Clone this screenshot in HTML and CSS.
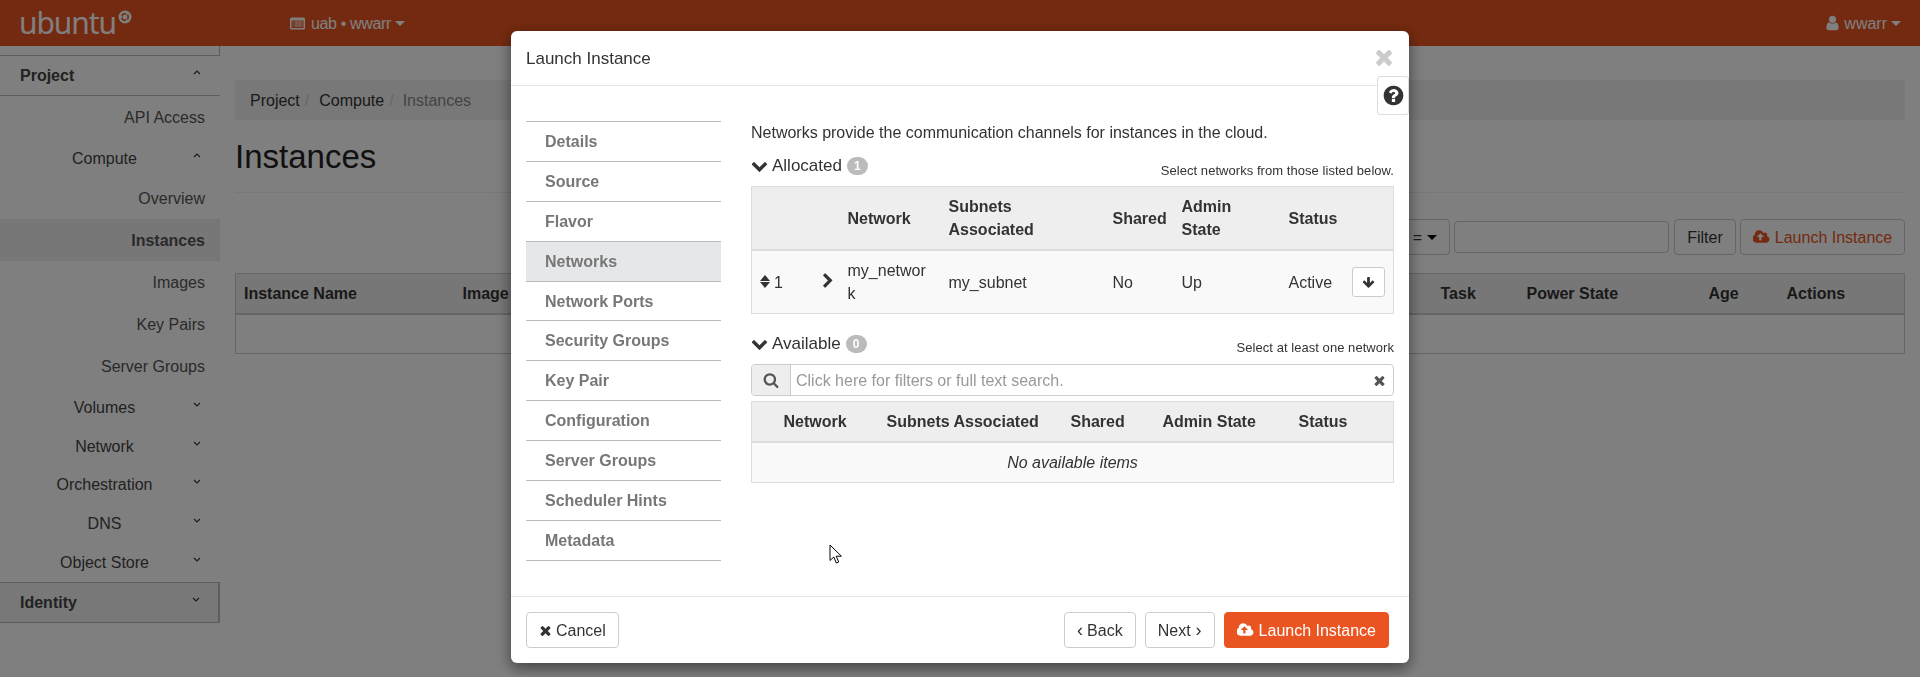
FILE: index.html
```html
<!DOCTYPE html>
<html lang="en">
<head>
<meta charset="utf-8">
<title>Instances</title>
<link rel="stylesheet" href="styles.css">
</head>
<body>
<svg class="defs" width="0" height="0" aria-hidden="true">
  <symbol id="i-times" viewBox="0 0 1792 1792"><path d="M1490 1322q0 40-28 68l-136 136q-28 28-68 28t-68-28l-294-294-294 294q-28 28-68 28t-68-28l-136-136q-28-28-28-68t28-68l294-294-294-294q-28-28-28-68t28-68l136-136q28-28 68-28t68 28l294 294 294-294q28-28 68-28t68 28l136 136q28 28 28 68t-28 68l-294 294 294 294q28 28 28 68z"/></symbol>
  <symbol id="i-question" viewBox="0 0 1792 1792"><path d="M1024 1376v-192q0-14-9-23t-23-9h-192q-14 0-23 9t-9 23v192q0 14 9 23t23 9h192q14 0 23-9t9-23zm256-672q0-88-55.500-163t-138.500-116-170-41q-243 0-371 213-15 24 8 42l132 100q7 6 19 6 16 0 25-12 53-68 86-92 34-24 86-24 48 0 85.500 26t37.500 59q0 38-20 61t-68 45q-63 28-115.500 86.500t-52.500 125.500v36q0 14 9 23t23 9h192q14 0 23-9t9-23q0-19 21.500-49.500t54.500-49.500q32-18 49-28.500t46-35 44.500-48 28-60.500 12.500-81zm384 192q0 209-103 385.500t-279.500 279.500-385.500 103-385.500-103-279.500-279.500-103-385.500 103-385.500 279.500-279.500 385.500-103 385.500 103 279.500 279.500 103 385.500z"/></symbol>
  <symbol id="i-chev-down" viewBox="0 0 1792 1792"><path d="M1683 808l-742 741q-19 19-45 19t-45-19l-742-741q-19-19-19-45.500t19-45.500l166-165q19-19 45-19t45 19l531 531 531-531q19-19 45-19t45 19l166 165q19 19 19 45.500t-19 45.500z"/></symbol>
  <symbol id="i-chev-right" viewBox="0 0 1792 1792"><path d="M1363 877l-742 742q-19 19-45 19t-45-19l-166-166q-19-19-19-45t19-45l531-531-531-531q-19-19-19-45t19-45l166-166q19-19 45-19t45 19l742 742q19 19 19 45t-19 45z"/></symbol>
  <symbol id="i-arrow-down" viewBox="0 0 1792 1792"><path d="M1675 832q0 53-37 90l-651 652q-39 37-91 37-53 0-90-37l-651-652q-38-36-38-90 0-53 38-91l74-75q39-37 91-37 53 0 90 37l294 294v-704q0-52 38-90t90-38h128q52 0 90 38t38 90v704l294-294q37-37 90-37 52 0 91 37l75 75q37 39 37 91z"/></symbol>
  <symbol id="i-search" viewBox="0 0 1792 1792"><path d="M1216 832q0-185-131.500-316.500t-316.500-131.500-316.500 131.500-131.500 316.500 131.500 316.500 316.500 131.500 316.500-131.500 131.500-316.500zm512 832q0 52-38 90t-90 38q-54 0-90-38l-343-342q-179 124-399 124-143 0-273.500-55.500t-225-150-150-225-55.500-273.500 55.500-273.500 150-225 225-150 273.500-55.500 273.500 55.500 225 150 150 225 55.500 273.500q0 220-124 399l343 343q37 37 37 90z"/></symbol>
  <symbol id="i-cloud" viewBox="0 0 1920 1792"><path d="M1216 864q0-14-9-23l-352-352q-9-9-23-9t-23 9l-351 351q-10 12-10 24 0 14 9 23t23 9h224v352q0 13 9.500 22.500t22.500 9.500h192q13 0 22.500-9.500t9.500-22.500v-352h224q13 0 22.500-9.500t9.500-22.500zm640 288q0 159-112.500 271.500t-271.500 112.500h-1088q-185 0-316.500-131.500t-131.500-316.500q0-130 70-240t188-165q-2-30-2-43 0-212 150-362t362-150q156 0 285.500 87t188.500 231q71-62 166-62 106 0 181 75t75 181q0 76-41 138 130 31 213.500 135.500t83.500 238.500z"/></symbol>
  <symbol id="i-user" viewBox="0 0 1792 1792"><path d="M1536 1399q0 109-62.500 187t-150.500 78h-854q-88 0-150.500-78t-62.500-187q0-85 8.500-160.500t31.500-152 58.500-131 94-89 134.500-34.500q131 128 313 128t313-128q76 0 134.500 34.500t94 89 58.500 131 31.500 152 8.500 160.500zm-256-887q0 159-112.500 271.500t-271.500 112.500-271.500-112.500-112.500-271.500 112.500-271.500 271.500-112.500 271.500 112.500 112.500 271.500z"/></symbol>
  <symbol id="i-up" viewBox="0 0 8 5"><path d="M1 4l3-3 3 3" fill="none" stroke="currentColor" stroke-width="1.100"/></symbol>
  <symbol id="i-down" viewBox="0 0 8 5"><path d="M1 1l3 3 3-3" fill="none" stroke="currentColor" stroke-width="1.100"/></symbol>
</svg>

<header class="navbar">
  <div class="brand">
    <span class="brand-word">ubuntu</span>
    <svg class="brand-mark" viewBox="0 0 14 14"><circle cx="7" cy="7" r="6.500" fill="currentColor"/><circle cx="7" cy="7" r="3.200" fill="none" stroke="#e95420" stroke-width="1.500"/><circle cx="3.200" cy="7" r="1.100" fill="currentColor"/><circle cx="9" cy="3.700" r="1.100" fill="currentColor"/><circle cx="9" cy="10.300" r="1.100" fill="currentColor"/></svg>
  </div>
  <div class="project-picker">
    <svg class="tray" viewBox="0 0 16 13"><rect x="0.500" y="0.500" width="15" height="12" rx="1.500" fill="currentColor"/><path d="M2 3.500h12v7.500H2z" fill="#e95420"/><path d="M5 5h8M5 7h8M5 9h8M3 5h1M3 7h1M3 9h1" stroke="currentColor"/></svg>
    <span class="picker-text">uab • wwarr</span><i class="caret"></i>
  </div>
  <div class="user-menu">
    <svg class="ic user-ic"><use href="#i-user"/></svg>
    <span>wwarr</span><i class="caret"></i>
  </div>
</header>

<div class="page">
  <nav class="sidebar">
    <div class="side-stub"></div>
    <div class="side-head side-project"><span>Project</span><svg class="angle"><use href="#i-up"/></svg></div>
    <a class="leaf">API Access</a>
    <div class="group group-tall"><span>Compute</span><svg class="angle"><use href="#i-up"/></svg></div>
    <a class="leaf leaf-short">Overview</a>
    <a class="leaf leaf-active">Instances</a>
    <a class="leaf">Images</a>
    <a class="leaf">Key Pairs</a>
    <a class="leaf">Server Groups</a>
    <div class="group group-tall"><span>Volumes</span><svg class="angle"><use href="#i-down"/></svg></div>
    <div class="group group-short"><span>Network</span><svg class="angle"><use href="#i-down"/></svg></div>
    <div class="group"><span>Orchestration</span><svg class="angle"><use href="#i-down"/></svg></div>
    <div class="group"><span>DNS</span><svg class="angle"><use href="#i-down"/></svg></div>
    <div class="group"><span>Object Store</span><svg class="angle"><use href="#i-down"/></svg></div>
    <div class="side-head side-identity"><span>Identity</span><svg class="angle"><use href="#i-down"/></svg></div>
  </nav>

  <main class="content">
    <ol class="crumbs">
      <li>Project</li><li class="sep">/</li><li>Compute</li><li class="sep">/</li><li class="crumb-current">Instances</li>
    </ol>
    <h1 class="page-title">Instances</h1>
    <div class="toolbar">
      <button class="btn btn-drop">Instance ID = <i class="caret caret-dark"></i></button>
      <input class="filter-input" type="text" aria-label="Filter">
      <button class="btn btn-filter">Filter</button>
      <button class="btn btn-launch-outline"><svg class="ic cloud-ic"><use href="#i-cloud"/></svg>Launch Instance</button>
    </div>
    <table class="inst-table">
      <colgroup><col class="c-name"><col class="c-image"><col class="c-task"><col class="c-power"><col class="c-age"><col class="c-actions"></colgroup>
      <thead><tr><th>Instance Name</th><th>Image</th><th>Task</th><th>Power State</th><th>Age</th><th>Actions</th></tr></thead>
      <tbody><tr><td colspan="6">&nbsp;</td></tr></tbody>
    </table>
  </main>
</div>

<div class="backdrop"></div>

<div class="modal-wrap">
  <section class="modal">
    <div class="modal-head">
      <h2 class="modal-title">Launch Instance</h2>
      <svg class="ic close-ic"><use href="#i-times"/></svg>
    </div>
    <div class="help-tab"><svg class="ic help-ic"><use href="#i-question"/></svg></div>
    <div class="modal-body">
      <ul class="steps">
        <li>Details</li>
        <li>Source</li>
        <li>Flavor</li>
        <li class="step-active">Networks</li>
        <li>Network Ports</li>
        <li>Security Groups</li>
        <li>Key Pair</li>
        <li>Configuration</li>
        <li>Server Groups</li>
        <li>Scheduler Hints</li>
        <li>Metadata</li>
      </ul>
      <div class="pane">
        <p class="intro">Networks provide the communication channels for instances in the cloud.</p>
        <div class="sec-row">
          <div class="sec-title"><svg class="ic sec-chev"><use href="#i-chev-down"/></svg>Allocated<span class="badge">1</span></div>
          <small class="sec-hint">Select networks from those listed below.</small>
        </div>
        <table class="net-table alloc">
          <colgroup><col class="a-drag"><col class="a-exp"><col class="a-net"><col class="a-sub"><col class="a-shared"><col class="a-admin"><col class="a-status"><col class="a-act"></colgroup>
          <thead><tr><th></th><th></th><th>Network</th><th>Subnets Associated</th><th>Shared</th><th>Admin State</th><th>Status</th><th></th></tr></thead>
          <tbody><tr>
            <td class="drag-cell"><span class="sort"><i class="tri-up"></i><i class="tri-down"></i></span>1</td>
            <td class="exp-cell"><svg class="ic exp-ic"><use href="#i-chev-right"/></svg></td>
            <td class="net-name">my_network</td>
            <td>my_subnet</td>
            <td>No</td>
            <td>Up</td>
            <td>Active</td>
            <td class="act-cell"><button class="btn-mini"><svg class="ic mini-ic"><use href="#i-arrow-down"/></svg></button></td>
          </tr></tbody>
        </table>
        <div class="sec-row sec-row-2">
          <div class="sec-title"><svg class="ic sec-chev"><use href="#i-chev-down"/></svg>Available<span class="badge">0</span></div>
          <small class="sec-hint">Select at least one network</small>
        </div>
        <div class="search-bar">
          <span class="search-addon"><svg class="ic search-ic"><use href="#i-search"/></svg></span>
          <span class="search-text">Click here for filters or full text search.</span>
          <svg class="ic clear-ic"><use href="#i-times"/></svg>
        </div>
        <table class="net-table avail">
          <colgroup><col class="b-first"><col class="b-net"><col class="b-sub"><col class="b-shared"><col class="b-admin"><col class="b-status"></colgroup>
          <thead><tr><th></th><th>Network</th><th>Subnets Associated</th><th>Shared</th><th>Admin State</th><th>Status</th></tr></thead>
          <tbody><tr><td colspan="6" class="empty-cell">No available items</td></tr></tbody>
        </table>
      </div>
    </div>
    <div class="modal-foot">
      <button class="btn btn-foot"><svg class="ic foot-x"><use href="#i-times"/></svg>Cancel</button>
      <div class="foot-right">
        <button class="btn btn-foot"><span class="ang">‹</span>Back</button>
        <button class="btn btn-foot">Next<span class="ang ang-r">›</span></button>
        <button class="btn btn-foot btn-primary"><svg class="ic cloud-ic"><use href="#i-cloud"/></svg>Launch Instance</button>
      </div>
    </div>
  </section>
</div>

<svg class="cursor" viewBox="0 0 13 20"><path d="M1 1v15.500l3.800-3.500 2.500 6 2.400-1-2.500-5.800h5.200z" fill="#fff" stroke="#000" stroke-width="1"/></svg>
</body>
</html>
```
FILE: styles.css
```css
* { box-sizing: border-box; }
html, body { margin: 0; height: 100%; }
body {
  overflow: hidden;
  background: #fff;
  color: #333;
  font-family: "Liberation Sans", Arial, sans-serif;
  font-size: 16px;
  line-height: 23px;
}
.defs { position: absolute; }
.ic { display: inline-block; fill: currentColor; flex: none; }

/* caret */
.caret {
  display: inline-block;
  width: 0; height: 0;
  margin-left: 5px;
  vertical-align: middle;
  border-top: 5px solid currentColor;
  border-left: 5px solid transparent;
  border-right: 5px solid transparent;
}
.caret-dark { color: #000; }

/* navbar */
.navbar {
  height: 46px;
  display: flex;
  align-items: center;
  background: #e95420;
  color: #fff;
  padding: 0 19px 0 19px;
}
.brand { width: 270px; display: flex; align-items: flex-start; color: #fff; }
.brand-word { font-family: "Noto Sans", sans-serif; font-weight: 400; font-size: 30px; line-height: 40px; letter-spacing: -1.100px; }
.brand-mark { width: 14px; height: 14px; margin: 7px 0 0 2px; }
.project-picker { display: flex; align-items: center; gap: 5px; flex: 1; }
.picker-text { letter-spacing: -0.35px; }
.project-picker .caret { margin-left: -1px; }
.tray { width: 17px; height: 13px; }
.user-menu { display: flex; align-items: center; }
.user-ic { width: 17px; height: 18px; margin-right: 3px; }
.user-menu .caret { margin-left: 4px; }

/* page */
.page { display: flex; align-items: flex-start; }
.sidebar { width: 220px; flex: none; color: #555; }
.side-stub { height: 10px; border-bottom: 1px solid #bbb; border-right: 1px solid #bbb; }
.side-head {
  display: flex; align-items: center; justify-content: space-between;
  padding: 0 19px 0 20px;
  font-weight: 700; color: #444;
}
.side-project { height: 40px; border-bottom: 1px solid #bbb; }
.side-identity { height: 41px; background: #f0f0f0; border: 1px solid #bbb; border-left: 0; border-right-width: 2px; padding-right: 18px; }
.angle { width: 8px; height: 5px; margin-top: -6px; color: #333; }
.leaf { display: block; height: 42px; line-height: 43px; text-align: right; padding-right: 15px; }
.leaf-short { height: 41px; line-height: 41px; }
.leaf-active { font-weight: 700; background: #eee; }
.group {
  height: 39px; display: flex; align-items: center; color: #444;
  padding-right: 19px;
}
.group span { width: 208px; text-align: center; margin-right: -15px; padding-left: 1px; }
.group-tall { height: 40px; }
.group-short { height: 38px; }

.content { flex: 1; padding: 34px 15px 0 15px; min-width: 0; }
.crumbs {
  list-style: none; margin: 0; padding: 9px 15px 0; height: 40px;
  display: flex; gap: 5px; background: #f1f1f1; border-radius: 4px; color: #333;
}
.sep { color: #ccc; padding-right: 5px; }
.crumb-current { color: #888; margin-left: -1px; }
.page-title {
  margin: 17px 0 0; font-size: 33px; font-weight: 400; line-height: 40px; color: #222;
  padding-bottom: 15px; border-bottom: 1px solid #eee;
}
.toolbar { display: flex; justify-content: flex-end; align-items: center; gap: 4px; margin-top: 26px; }
.btn {
  height: 36px; padding: 0 12px;
  display: inline-flex; align-items: center;
  background: #fff; border: 1px solid #ccc; border-radius: 4px;
  color: #333; font: inherit; line-height: 23px; white-space: nowrap;
}
.filter-input { width: 215px; height: 32px; border: 1px solid #ccc; border-radius: 4px; background: #fff; margin-right: 1px; }
.btn-filter { width: 62px; justify-content: center; }
.btn-launch-outline { color: #e95420; width: 165px; padding: 0; justify-content: center; }
.cloud-ic { width: 17px; height: 16px; margin-right: 5px; }
.inst-table {
  width: 100%; table-layout: fixed; border-collapse: collapse; margin-top: 18px;
  border: 1px solid #ccc;
}
.inst-table th { background: #eee; text-align: left; padding: 8px; border-bottom: 2px solid #ccc; color: #333; font-weight: 700; }
.inst-table td { padding: 7px 8px 8px; }
.c-name { width: 219px; }
.c-image { width: 978px; }
.c-task { width: 86px; }
.c-power { width: 182px; }
.c-age { width: 78px; }

/* modal */
.backdrop { position: fixed; inset: 0; background: rgba(0,0,0,.5); }
.modal-wrap { position: fixed; inset: 0; }
.modal {
  position: relative;
  width: 898px; height: 632px; margin: 31px auto 0;
  display: flex; flex-direction: column;
  background: #fff; border-radius: 6px;
  box-shadow: 0 5px 15px rgba(0,0,0,.5);
}
.modal-head {
  height: 55px; flex: none;
  display: flex; align-items: center; justify-content: space-between;
  padding: 0 13px 0 15px; border-bottom: 1px solid #e5e5e5;
}
.modal-title { margin: 2px 0 0; font-size: 17px; font-weight: 400; color: #333; line-height: 24px; }
.close-ic { width: 24px; height: 24px; color: #ccc; margin-top: -3px; }
.help-tab {
  position: absolute; right: 0; top: 45px; width: 32px; height: 39px;
  display: flex; align-items: center; justify-content: center;
  background: #fff; border: 1px solid #ddd; border-radius: 3px;
}
.help-ic { width: 23px; height: 23px; color: #333; }
.modal-body { flex: 1; display: flex; padding: 35px 15px 0 15px; gap: 30px; min-height: 0; }
.steps { list-style: none; margin: 0; padding: 0; width: 195px; flex: none; border-top: 1px solid #bbb; align-self: flex-start; }
.steps li {
  height: 39.9px; line-height: 39px; padding-left: 19px;
  border-bottom: 1px solid #bbb; font-weight: 700; color: #777;
}
.steps .step-active { background: #e6e7e8; }
.pane { flex: 1; min-width: 0; }
.intro { margin: 0; color: #333; }
.sec-row { display: flex; justify-content: space-between; margin-top: 9px; height: 24px; }
.sec-row-2 { margin-top: 17px; }
.sec-title { font-size: 17px; color: #333; display: flex; align-items: center; }
.sec-chev { width: 17px; height: 17px; margin-right: 4px; }
.badge {
  display: inline-block; min-width: 21px; height: 18px; margin-left: 5px; margin-top: 2px;
  background: #bbb; color: #fff; border-radius: 10px;
  font-size: 12px; font-weight: 700; line-height: 18px; text-align: center;
}
.sec-hint { font-size: 13px; letter-spacing: 0.05px; color: #333; line-height: 16px; align-self: flex-end; margin-bottom: -2px; }
.sec-row-2 .sec-hint { margin-bottom: -1px; }
.net-table {
  width: 100%; table-layout: fixed; border-collapse: collapse;
  margin-top: 9px; border: 1px solid #ddd;
}
.net-table th {
  background: #eee; border-bottom: 2px solid #ddd; padding: 8px;
  text-align: left; font-weight: 700; color: #333;
}
.net-table td { background: #f9f9f9; padding: 8px; vertical-align: middle; color: #333; }
.a-drag { width: 65px; }
.a-exp { width: 23px; }
.a-net { width: 101px; }
.a-sub { width: 164px; }
.a-shared { width: 69px; }
.a-admin { width: 107px; }
.a-status { width: 69px; }
.drag-cell { white-space: nowrap; }
.sort { display: inline-flex; flex-direction: column; gap: 1px; width: 10px; margin: -3px 4px 0 0; vertical-align: middle; }
.tri-up, .tri-down { display: block; width: 0; height: 0; border-left: 5px solid transparent; border-right: 5px solid transparent; }
.tri-up { border-bottom: 6px solid #333; }
.tri-down { border-top: 6px solid #333; }
.exp-cell { padding: 8px 0 !important; }
.exp-ic { width: 16px; height: 16px; display: block; margin: -2px 0 0 3px; color: #333; }
.net-name { word-break: break-all; }
.act-cell { padding: 0 !important; }
.btn-mini {
  width: 33px; height: 30px; padding: 0; margin-left: 2px;
  display: inline-flex; align-items: center; justify-content: center;
  background: #fff; border: 1px solid #ccc; border-radius: 3px;
}
.mini-ic { width: 13px; height: 13px; color: #333; }
.search-bar {
  margin-top: 9px; height: 32px; display: flex; align-items: center;
  border: 1px solid #ccc; border-radius: 4px; overflow: hidden;
}
.search-addon {
  width: 39px; height: 100%; flex: none; display: flex; align-items: center; justify-content: center;
  background: #eee; border-right: 1px solid #ccc; color: #555;
}
.search-ic { width: 16px; height: 16px; }
.search-text { flex: 1; padding-left: 5px; color: #999; }
.clear-ic { width: 15px; height: 15px; margin-right: 6px; color: #555; }
.avail { margin-top: 5px; }
.b-first { width: 24px; }
.b-net { width: 103px; }
.b-sub { width: 184px; }
.b-shared { width: 92px; }
.b-admin { width: 136px; }
.empty-cell { text-align: center; font-style: italic; }
.modal-foot {
  height: 67px; flex: none;
  display: flex; align-items: center; justify-content: space-between;
  padding: 0 20px 0 15px; border-top: 1px solid #e5e5e5;
}
.foot-right { display: flex; gap: 9px; }
.btn-foot { color: #333; }
.foot-x { width: 15px; height: 15px; margin-right: 3px; margin-left: -1px; }
.ang { font-size: 18px; margin-right: 4px; line-height: 20px; }
.ang-r { margin: 0 0 0 5px; }
.btn-primary { background: #e95420; border-color: #e95420; color: #fff; }

.cursor { position: fixed; left: 829px; top: 544px; width: 13px; height: 20px; }
```
